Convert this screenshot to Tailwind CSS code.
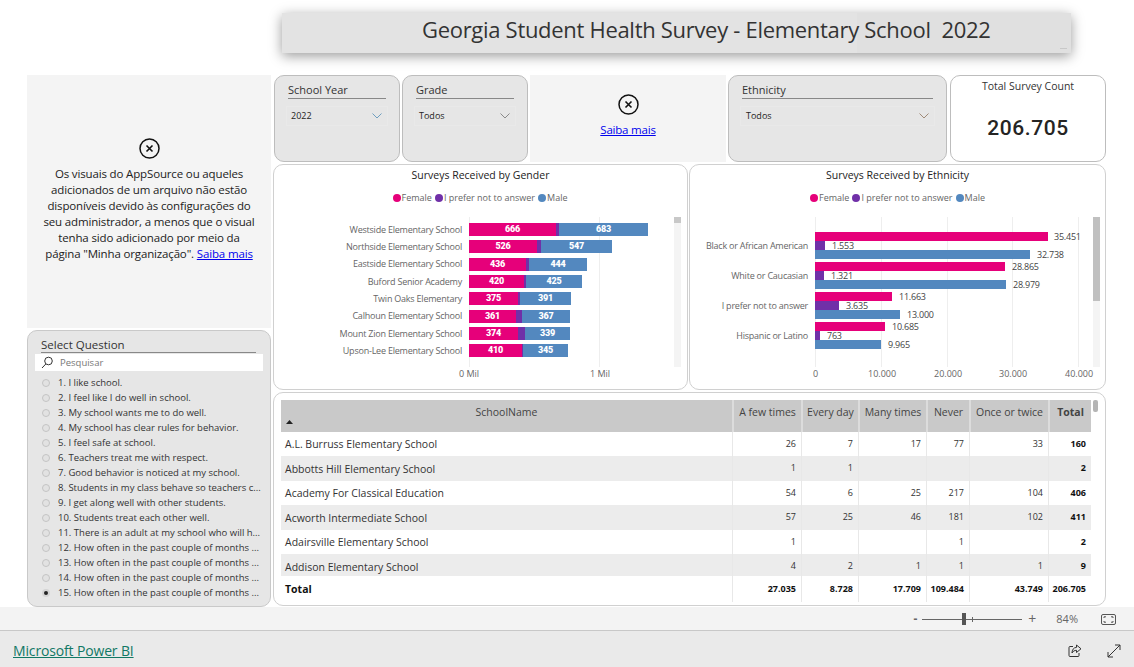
<!DOCTYPE html>
<html>

<head>
  <title>Georgia Student Health Survey</title>
  <script src="https://cdn.jsdelivr.net/npm/@tailwindcss/browser@4"></script>
</head>

<body class="bg-white">
  <div class="w-[1134px] h-[667px] overflow-hidden flex flex-col font-['Open_Sans',sans-serif] text-[#252423]">

    <!-- report canvas -->
    <div class="h-[607px] pt-[13px] bg-white">
      <div class="relative ml-[282px] w-[789px] h-[40px] bg-[#e3e3e3] shadow-[0_3px_12px_rgba(0,0,0,0.4)]">
        <div class="absolute right-0 top-0 w-[214px] h-[40px] bg-[#e0e0e0]"></div>
        <div class="absolute right-[4px] bottom-[4px] w-[7px] h-[1px] bg-[#c8c8c8]"></div>
        <div class="relative pl-[140px] text-[22px] leading-[33px] text-[#333] whitespace-pre tracking-[-0.3px]">Georgia Student Health Survey - Elementary School  2022</div>
      </div>

      <div class="flex gap-[2px] mt-[22px] pl-[27px]">
        <!-- left column -->
        <div class="w-[244px] flex flex-col gap-[2px]">
          <div class="h-[253px] bg-[#f4f4f4] flex flex-col items-center pt-[63px] text-center text-[11.5px] leading-[16px] tracking-[-0.15px] text-[#222]">
            <svg class="w-[21px] h-[21px] mb-[7px]" viewBox="0 0 21 21" fill="none" stroke="#111"><circle cx="10.5" cy="10.5" r="9.5" stroke-width="1.5" /><path d="M7.5 7.5l6 6M13.5 7.5l-6 6" stroke-width="1.6" /></svg>
            <p class="w-[214px]">Os visuais do AppSource ou aqueles adicionados de um arquivo não estão disponíveis devido às configurações do seu administrador, a menos que o visual tenha sido adicionado por meio da página "Minha organização". <a class="text-[#0000ee] underline">Saiba mais</a></p>
          </div>

          <div class="h-[277px] bg-[#e6e6e6] border border-[#c9c9c9] rounded-[10px] pt-[6px] relative">
            <div class="ml-[13px] mr-[14px] text-[11.5px] leading-[15px] border-b border-[#888] text-[#333]">Select Question</div>
            <div class="mx-[7px] h-[17px] mt-[1px] bg-white flex items-center pl-[6px] gap-[7px]">
              <svg class="w-[12px] h-[13px]" viewBox="0 0 12 13" fill="none" stroke="#333"><circle cx="7.5" cy="5" r="3.8" /><path d="M4.8 8L1 12" /></svg>
              <span class="text-[9.5px] text-[#777] pt-[2px]">Pesquisar</span>
            </div>
            <ul class="mt-[4px] text-[9.5px] leading-[15px] text-[#333] whitespace-nowrap">
              <li class="flex items-center h-[15px] pl-[14px] gap-[8px]"><span class="w-[8px] h-[8px] rounded-full border border-[#c4c4c4] bg-[#e2e2e2]"></span>1. I like school.</li>
              <li class="flex items-center h-[15px] pl-[14px] gap-[8px]"><span class="w-[8px] h-[8px] rounded-full border border-[#c4c4c4] bg-[#e2e2e2]"></span>2. I feel like I do well in school.</li>
              <li class="flex items-center h-[15px] pl-[14px] gap-[8px]"><span class="w-[8px] h-[8px] rounded-full border border-[#c4c4c4] bg-[#e2e2e2]"></span>3. My school wants me to do well.</li>
              <li class="flex items-center h-[15px] pl-[14px] gap-[8px]"><span class="w-[8px] h-[8px] rounded-full border border-[#c4c4c4] bg-[#e2e2e2]"></span>4. My school has clear rules for behavior.</li>
              <li class="flex items-center h-[15px] pl-[14px] gap-[8px]"><span class="w-[8px] h-[8px] rounded-full border border-[#c4c4c4] bg-[#e2e2e2]"></span>5. I feel safe at school.</li>
              <li class="flex items-center h-[15px] pl-[14px] gap-[8px]"><span class="w-[8px] h-[8px] rounded-full border border-[#c4c4c4] bg-[#e2e2e2]"></span>6. Teachers treat me with respect.</li>
              <li class="flex items-center h-[15px] pl-[14px] gap-[8px]"><span class="w-[8px] h-[8px] rounded-full border border-[#c4c4c4] bg-[#e2e2e2]"></span>7. Good behavior is noticed at my school.</li>
              <li class="flex items-center h-[15px] pl-[14px] gap-[8px]"><span class="w-[8px] h-[8px] rounded-full border border-[#c4c4c4] bg-[#e2e2e2]"></span>8. Students in my class behave so teachers c...</li>
              <li class="flex items-center h-[15px] pl-[14px] gap-[8px]"><span class="w-[8px] h-[8px] rounded-full border border-[#c4c4c4] bg-[#e2e2e2]"></span>9. I get along well with other students.</li>
              <li class="flex items-center h-[15px] pl-[14px] gap-[8px]"><span class="w-[8px] h-[8px] rounded-full border border-[#c4c4c4] bg-[#e2e2e2]"></span>10. Students treat each other well.</li>
              <li class="flex items-center h-[15px] pl-[14px] gap-[8px]"><span class="w-[8px] h-[8px] rounded-full border border-[#c4c4c4] bg-[#e2e2e2]"></span>11. There is an adult at my school who will h...</li>
              <li class="flex items-center h-[15px] pl-[14px] gap-[8px]"><span class="w-[8px] h-[8px] rounded-full border border-[#c4c4c4] bg-[#e2e2e2]"></span>12. How often in the past couple of months ...</li>
              <li class="flex items-center h-[15px] pl-[14px] gap-[8px]"><span class="w-[8px] h-[8px] rounded-full border border-[#c4c4c4] bg-[#e2e2e2]"></span>13. How often in the past couple of months ...</li>
              <li class="flex items-center h-[15px] pl-[14px] gap-[8px]"><span class="w-[8px] h-[8px] rounded-full border border-[#c4c4c4] bg-[#e2e2e2]"></span>14. How often in the past couple of months ...</li>
              <li class="flex items-center h-[15px] pl-[14px] gap-[8px]"><span class="w-[8px] h-[8px] rounded-full border-2 border-[#d4d4d4] bg-[#222]"></span>15. How often in the past couple of months ...</li>
            </ul>
          </div>
        </div>

        <!-- right column -->
        <div class="w-[833px] flex flex-col gap-[2px]">
          <!-- slicers -->
          <div class="h-[87px] flex">
            <div class="ml-[1px] w-[126px] bg-[#e6e6e6] border border-[#bdbdbd] rounded-[10px] px-[13px] pt-[7px]">
              <div class="text-[11px] leading-[14px] pb-[1px] border-b border-[#888] text-[#333]">School Year</div>
              <div class="-mx-[2px] mt-[7px] h-[20px] pl-[4px] pr-[5px] flex items-center justify-between border border-[#e9e9e9] text-[9px]">2022
                <svg class="w-[10px] h-[6px]" viewBox="0 0 10 6" fill="none" stroke="#6f9fc0"><path d="M.5.5L5 5l4.5-4.5" /></svg>
              </div>
            </div>
            <div class="ml-[2px] w-[126px] bg-[#e6e6e6] border border-[#bdbdbd] rounded-[10px] px-[13px] pt-[7px]">
              <div class="text-[11px] leading-[14px] pb-[1px] border-b border-[#888] text-[#333]">Grade</div>
              <div class="-mx-[2px] mt-[7px] h-[20px] pl-[4px] pr-[5px] flex items-center justify-between border border-[#e9e9e9] text-[9px]">Todos
                <svg class="w-[10px] h-[6px]" viewBox="0 0 10 6" fill="none" stroke="#8a8a8a"><path d="M.5.5L5 5l4.5-4.5" /></svg>
              </div>
            </div>
            <div class="ml-[2px] w-[196px] bg-[#f4f4f4] flex flex-col items-center pt-[19px]">
              <svg class="w-[21px] h-[21px] mb-[7px]" viewBox="0 0 21 21" fill="none" stroke="#111"><circle cx="10.5" cy="10.5" r="9.5" stroke-width="1.5" /><path d="M7.5 7.5l6 6M13.5 7.5l-6 6" stroke-width="1.6" /></svg>
              <a class="text-[11.5px] leading-[16px] tracking-[-0.2px] text-[#0000ee] underline">Saiba mais</a>
            </div>
            <div class="ml-[2px] w-[219px] bg-[#e6e6e6] border border-[#bdbdbd] rounded-[10px] px-[13px] pt-[7px]">
              <div class="text-[11px] leading-[14px] pb-[1px] border-b border-[#888] text-[#333]">Ethnicity</div>
              <div class="-mx-[2px] mt-[7px] h-[20px] pl-[5px] pr-[5px] flex items-center justify-between border border-[#e9e9e9] text-[9px]">Todos
                <svg class="w-[10px] h-[6px]" viewBox="0 0 10 6" fill="none" stroke="#a08a78"><path d="M.5.5L5 5l4.5-4.5" /></svg>
              </div>
            </div>
            <div class="ml-[3px] w-[156px] bg-white border border-[#bdbdbd] rounded-[10px] flex flex-col items-center pt-[3px]">
              <div class="text-[10.5px] leading-[14px] text-[#333]">Total Survey Count</div>
              <div class="mt-[21px] font-['Roboto',sans-serif] font-medium text-[21px] tracking-[0.6px] leading-[28px] text-[#252423]">206.705</div>
            </div>
          </div>

          <!-- charts -->
          <div class="h-[226px] flex gap-[1px]">
            <div class="w-[415px] bg-white border border-[#d0d0d0] rounded-[10px] pt-[3px] relative">
              <div class="text-center text-[10.5px] leading-[14px] text-[#222]">Surveys Received by Gender</div>
              <div class="mt-[10px] flex justify-center gap-[3px] pr-[1px] text-[9px] leading-[12px] text-[#666]">
                <span class="flex items-center gap-[1px]"><i class="w-[8px] h-[8px] rounded-full bg-[#e6007a]"></i>Female</span>
                <span class="flex items-center gap-[1px]"><i class="w-[8px] h-[8px] rounded-full bg-[#7030a8]"></i>I prefer not to answer</span>
                <span class="flex items-center gap-[1px]"><i class="w-[8px] h-[8px] rounded-full bg-[#5388bf]"></i>Male</span>
              </div>
              <div class="relative mt-[13px] h-[150px] text-[9px] text-[#666]">
                <div class="absolute left-[195px] top-0 bottom-0 w-[1px] bg-[#eeeeee]"></div>
                <div class="absolute left-[325px] top-0 bottom-0 w-[1px] bg-[#eeeeee]"></div>
                <div class="absolute left-[400px] top-0 w-[7px] h-[150px] bg-[#f4f4f4]"><div class="h-[6px] bg-[#c8c8c8]"></div></div>
                <div class="relative pt-[4px] flex flex-col tracking-[-0.22px]">
                  <div class="flex items-center h-[17.3px]"><span class="w-[188px] text-right pr-0 whitespace-nowrap">Westside Elementary School</span>
                    <div class="ml-[7px] flex h-[13px] text-white font-['Roboto',sans-serif] font-bold text-center leading-[13px]"><b class="w-[87px] bg-[#e6007a]">666</b><b class="w-[3px] bg-[#7030a8]"></b><b class="w-[89px] bg-[#5388bf]">683</b></div></div>
                  <div class="flex items-center h-[17.3px]"><span class="w-[188px] text-right whitespace-nowrap">Northside Elementary School</span>
                    <div class="ml-[7px] flex h-[13px] text-white font-['Roboto',sans-serif] font-bold text-center leading-[13px]"><b class="w-[68px] bg-[#e6007a]">526</b><b class="w-[4px] bg-[#7030a8]"></b><b class="w-[71px] bg-[#5388bf]">547</b></div></div>
                  <div class="flex items-center h-[17.3px]"><span class="w-[188px] text-right whitespace-nowrap">Eastside Elementary School</span>
                    <div class="ml-[7px] flex h-[13px] text-white font-['Roboto',sans-serif] font-bold text-center leading-[13px]"><b class="w-[57px] bg-[#e6007a]">436</b><b class="w-[3px] bg-[#7030a8]"></b><b class="w-[58px] bg-[#5388bf]">444</b></div></div>
                  <div class="flex items-center h-[17.3px]"><span class="w-[188px] text-right whitespace-nowrap">Buford Senior Academy</span>
                    <div class="ml-[7px] flex h-[13px] text-white font-['Roboto',sans-serif] font-bold text-center leading-[13px]"><b class="w-[55px] bg-[#e6007a]">420</b><b class="w-[2px] bg-[#7030a8]"></b><b class="w-[56px] bg-[#5388bf]">425</b></div></div>
                  <div class="flex items-center h-[17.3px]"><span class="w-[188px] text-right whitespace-nowrap">Twin Oaks Elementary</span>
                    <div class="ml-[7px] flex h-[13px] text-white font-['Roboto',sans-serif] font-bold text-center leading-[13px]"><b class="w-[49px] bg-[#e6007a]">375</b><b class="w-[2px] bg-[#7030a8]"></b><b class="w-[51px] bg-[#5388bf]">391</b></div></div>
                  <div class="flex items-center h-[17.3px]"><span class="w-[188px] text-right whitespace-nowrap">Calhoun Elementary School</span>
                    <div class="ml-[7px] flex h-[13px] text-white font-['Roboto',sans-serif] font-bold text-center leading-[13px]"><b class="w-[47px] bg-[#e6007a]">361</b><b class="w-[6px] bg-[#7030a8]"></b><b class="w-[48px] bg-[#5388bf]">367</b></div></div>
                  <div class="flex items-center h-[17.3px]"><span class="w-[188px] text-right whitespace-nowrap">Mount Zion Elementary School</span>
                    <div class="ml-[7px] flex h-[13px] text-white font-['Roboto',sans-serif] font-bold text-center leading-[13px]"><b class="w-[49px] bg-[#e6007a]">374</b><b class="w-[7px] bg-[#7030a8]"></b><b class="w-[45px] bg-[#5388bf]">339</b></div></div>
                  <div class="flex items-center h-[17.3px]"><span class="w-[188px] text-right whitespace-nowrap">Upson-Lee Elementary School</span>
                    <div class="ml-[7px] flex h-[13px] text-white font-['Roboto',sans-serif] font-bold text-center leading-[13px]"><b class="w-[53px] bg-[#e6007a]">410</b><b class="w-[1px] bg-[#7030a8]"></b><b class="w-[45px] bg-[#5388bf]">345</b></div></div>
                </div>
                <span class="absolute left-[185px] top-[150px] leading-[14px]">0 Mil</span>
                <span class="absolute left-[316px] top-[150px] leading-[14px]">1 Mil</span>
              </div>
            </div>

            <div class="w-[417px] bg-white border border-[#d0d0d0] rounded-[10px] pt-[3px] relative">
              <div class="text-center text-[10.5px] leading-[14px] text-[#222]">Surveys Received by Ethnicity</div>
              <div class="mt-[10px] flex justify-center gap-[3px] text-[9px] leading-[12px] text-[#666]">
                <span class="flex items-center gap-[1px]"><i class="w-[8px] h-[8px] rounded-full bg-[#e6007a]"></i>Female</span>
                <span class="flex items-center gap-[1px]"><i class="w-[8px] h-[8px] rounded-full bg-[#7030a8]"></i>I prefer not to answer</span>
                <span class="flex items-center gap-[1px]"><i class="w-[8px] h-[8px] rounded-full bg-[#5388bf]"></i>Male</span>
              </div>
              <div class="relative mt-[13px] h-[150px] text-[9px] text-[#666]">
                <div class="absolute left-[125px] top-0 bottom-0 w-[1px] bg-[#eeeeee]"></div>
                <div class="absolute left-[191px] top-0 bottom-0 w-[1px] bg-[#eeeeee]"></div>
                <div class="absolute left-[257px] top-0 bottom-0 w-[1px] bg-[#eeeeee]"></div>
                <div class="absolute left-[322px] top-0 bottom-0 w-[1px] bg-[#eeeeee]"></div>
                <div class="absolute left-[388px] top-0 bottom-0 w-[1px] bg-[#eeeeee]"></div>
                <div class="absolute left-[403px] top-0 w-[7px] h-[150px] bg-[#f4f4f4]"><div class="h-[84px] bg-[#c0c0c0]"></div></div>
                <div class="relative pt-[15px] flex flex-col gap-[3px] text-[#444] tracking-[-0.22px]">
                  <div class="flex items-center"><span class="w-[118px] text-right text-[#666] whitespace-nowrap">Black or African American</span>
                    <div class="ml-[7px] flex flex-col h-[27px]">
                      <div class="flex items-center h-[9px]"><i class="h-[9px] w-[233px] bg-[#e6007a]"></i><span class="ml-[6px]">35.451</span></div>
                      <div class="flex items-center h-[9px]"><i class="h-[9px] w-[10px] bg-[#7030a8]"></i><span class="ml-[7px]">1.553</span></div>
                      <div class="flex items-center h-[9px]"><i class="h-[9px] w-[215px] bg-[#5388bf]"></i><span class="ml-[7px]">32.738</span></div>
                    </div></div>
                  <div class="flex items-center"><span class="w-[118px] text-right text-[#666] whitespace-nowrap">White or Caucasian</span>
                    <div class="ml-[7px] flex flex-col h-[27px]">
                      <div class="flex items-center h-[9px]"><i class="h-[9px] w-[190px] bg-[#e6007a]"></i><span class="ml-[7px]">28.865</span></div>
                      <div class="flex items-center h-[9px]"><i class="h-[9px] w-[9px] bg-[#7030a8]"></i><span class="ml-[7px]">1.321</span></div>
                      <div class="flex items-center h-[9px]"><i class="h-[9px] w-[191px] bg-[#5388bf]"></i><span class="ml-[7px]">28.979</span></div>
                    </div></div>
                  <div class="flex items-center"><span class="w-[118px] text-right text-[#666] whitespace-nowrap">I prefer not to answer</span>
                    <div class="ml-[7px] flex flex-col h-[27px]">
                      <div class="flex items-center h-[9px]"><i class="h-[9px] w-[77px] bg-[#e6007a]"></i><span class="ml-[7px]">11.663</span></div>
                      <div class="flex items-center h-[9px]"><i class="h-[9px] w-[24px] bg-[#7030a8]"></i><span class="ml-[7px]">3.635</span></div>
                      <div class="flex items-center h-[9px]"><i class="h-[9px] w-[85px] bg-[#5388bf]"></i><span class="ml-[7px]">13.000</span></div>
                    </div></div>
                  <div class="flex items-center"><span class="w-[118px] text-right text-[#666] whitespace-nowrap">Hispanic or Latino</span>
                    <div class="ml-[7px] flex flex-col h-[27px]">
                      <div class="flex items-center h-[9px]"><i class="h-[9px] w-[70px] bg-[#e6007a]"></i><span class="ml-[7px]">10.685</span></div>
                      <div class="flex items-center h-[9px]"><i class="h-[9px] w-[5px] bg-[#7030a8]"></i><span class="ml-[7px]">763</span></div>
                      <div class="flex items-center h-[9px]"><i class="h-[9px] w-[66px] bg-[#5388bf]"></i><span class="ml-[7px]">9.965</span></div>
                    </div></div>
                </div>
                <span class="absolute left-[123px] top-[150px] leading-[14px]">0</span>
                <span class="absolute left-[178px] top-[150px] leading-[14px]">10.000</span>
                <span class="absolute left-[244px] top-[150px] leading-[14px]">20.000</span>
                <span class="absolute left-[309px] top-[150px] leading-[14px]">30.000</span>
                <span class="absolute left-[375px] top-[150px] leading-[14px]">40.000</span>
              </div>
            </div>
          </div>

          <!-- matrix -->
          <div class="h-[214px] bg-white border border-[#d0d0d0] rounded-[10px] pl-[7px] pt-[7px] relative">
            <div class="absolute left-[819px] top-[7px] w-[5px] h-[12px] rounded-[2px] bg-[#b5b5b5]"></div>
            <div class="w-[810px] text-[9px] text-[#333]">
              <div class="grid grid-cols-[451px_69px_57px_68px_43px_79px_43px] h-[32px] bg-[#c9c9c9] text-[10.5px] leading-[14px] text-[#444] whitespace-nowrap relative">
                <div class="text-center pt-[5px]">SchoolName</div>
                <div class="border-l-2 border-[#dcdcdc] text-center pt-[5px]">A few times</div>
                <div class="border-l-2 border-[#dcdcdc] text-center pt-[5px]">Every day</div>
                <div class="border-l-2 border-[#dcdcdc] text-center pt-[5px]">Many times</div>
                <div class="border-l-2 border-[#dcdcdc] text-center pt-[5px]">Never</div>
                <div class="border-l-2 border-[#dcdcdc] text-center pt-[5px]">Once or twice</div>
                <div class="border-l-2 border-[#dcdcdc] text-center pt-[5px] font-bold">Total</div>
                <svg class="absolute left-[5px] top-[20px] w-[7px] h-[4px]" viewBox="0 0 7 4" fill="#222"><path d="M3.5 0L7 4H0z" /></svg>
              </div>
              <div class="grid grid-cols-[451px_69px_57px_68px_43px_79px_43px] h-[24.4px] items-center text-right [&>*]:h-full [&>*]:pr-[5px] [&>*]:leading-[24px] [&>*]:border-l [&>*]:border-[#e8e8e8]">
                <div class="!border-0 text-left pl-[4px] text-[10.5px] !leading-[25px]">A.L. Burruss Elementary School</div><div>26</div><div>7</div><div>17</div><div>77</div><div>33</div><div class="font-bold text-[#111]">160</div>
              </div>
              <div class="grid grid-cols-[451px_69px_57px_68px_43px_79px_43px] h-[24.4px] bg-[#ececec] items-center text-right [&>*]:h-full [&>*]:pr-[5px] [&>*]:leading-[24px] [&>*]:border-l [&>*]:border-[#e8e8e8]">
                <div class="!border-0 text-left pl-[4px] text-[10.5px] !leading-[26px]">Abbotts Hill Elementary School</div><div>1</div><div>1</div><div></div><div></div><div></div><div class="font-bold text-[#111]">2</div>
              </div>
              <div class="grid grid-cols-[451px_69px_57px_68px_43px_79px_43px] h-[24.4px] items-center text-right [&>*]:h-full [&>*]:pr-[5px] [&>*]:leading-[24px] [&>*]:border-l [&>*]:border-[#e8e8e8]">
                <div class="!border-0 text-left pl-[4px] text-[10.5px] !leading-[25px]">Academy For Classical Education</div><div>54</div><div>6</div><div>25</div><div>217</div><div>104</div><div class="font-bold text-[#111]">406</div>
              </div>
              <div class="grid grid-cols-[451px_69px_57px_68px_43px_79px_43px] h-[24.4px] bg-[#ececec] items-center text-right [&>*]:h-full [&>*]:pr-[5px] [&>*]:leading-[24px] [&>*]:border-l [&>*]:border-[#e8e8e8]">
                <div class="!border-0 text-left pl-[4px] text-[10.5px] !leading-[26px]">Acworth Intermediate School</div><div>57</div><div>25</div><div>46</div><div>181</div><div>102</div><div class="font-bold text-[#111]">411</div>
              </div>
              <div class="grid grid-cols-[451px_69px_57px_68px_43px_79px_43px] h-[24.4px] items-center text-right [&>*]:h-full [&>*]:pr-[5px] [&>*]:leading-[24px] [&>*]:border-l [&>*]:border-[#e8e8e8]">
                <div class="!border-0 text-left pl-[4px] text-[10.5px] !leading-[25px]">Adairsville Elementary School</div><div>1</div><div></div><div></div><div>1</div><div></div><div class="font-bold text-[#111]">2</div>
              </div>
              <div class="grid grid-cols-[451px_69px_57px_68px_43px_79px_43px] h-[22px] bg-[#ececec] items-center text-right [&>*]:h-full [&>*]:pr-[5px] [&>*]:leading-[24px] [&>*]:border-l [&>*]:border-[#e8e8e8]">
                <div class="!border-0 text-left pl-[4px] text-[10.5px] !leading-[26px]">Addison Elementary School</div><div>4</div><div>2</div><div>1</div><div>1</div><div>1</div><div class="font-bold text-[#111]">9</div>
              </div>
              <div class="grid grid-cols-[451px_69px_57px_68px_43px_79px_43px] h-[24px] items-center text-right font-bold text-[#111] [&>*]:h-full [&>*]:pr-[5px] [&>*]:leading-[25px] [&>*]:border-l [&>*]:border-[#e8e8e8]">
                <div class="!border-0 text-left pl-[4px] text-[10.5px] !leading-[26px]">Total</div><div>27.035</div><div>8.728</div><div>17.709</div><div>109.484</div><div>43.749</div><div>206.705</div>
              </div>
            </div>
          </div>
        </div>
      </div>
    </div>

    <!-- zoom bar -->
    <div class="h-[24px] pt-[1px] bg-[#f3f3f3] border-b border-[#c8c8c8] flex items-center justify-end text-[#666]">
      <span class="text-[12px] font-bold leading-none mr-[5px]">-</span>
      <div class="relative w-[100px] h-[1px] bg-[#666] mr-[6px]">
        <i class="absolute left-[40px] -top-[6px] w-[4px] h-[12px] bg-[#555]"></i>
        <i class="absolute left-[50px] -top-[2px] w-[1px] h-[5px] bg-[#666]"></i>
      </div>
      <span class="text-[14px] leading-none mr-[20px]">+</span>
      <span class="text-[11px] mr-[23px]">84%</span>
      <svg class="w-[15px] h-[11px] mr-[18px]" viewBox="0 0 15 11" fill="none" stroke="#555"><rect x=".5" y=".5" width="14" height="10" rx="1.5" /><path d="M3 4V2.8h2M12 4V2.8h-2M3 7v1.2h2M12 7v1.2h-2" /></svg>
    </div>

    <!-- footer -->
    <div class="flex-1 pt-[3px] bg-[#eaeaea] flex items-center justify-between pl-[13px] pr-[13px]">
      <a class="text-[14px] font-normal tracking-[-0.15px] text-[#117865] underline">Microsoft Power BI</a>
      <div class="flex items-center gap-[25px]">
        <svg class="w-[14px] h-[14px]" viewBox="0 0 14 14" fill="none" stroke="#333"><path d="M5 2.5H2a1 1 0 00-1 1v8a1 1 0 001 1h8a1 1 0 001-1V9" /><path d="M8.5 1l4.5 3.8-4.5 3.7V6.3C6.5 6.3 5 7.3 4 9c0-3 1.5-5.5 4.5-5.6z" /></svg>
        <svg class="w-[14px] h-[14px]" viewBox="0 0 14 14" fill="none" stroke="#333"><path d="M1 13L13 1M8 1h5v5M1 8v5h5" /></svg>
      </div>
    </div>
  </div>
</body>

</html>
